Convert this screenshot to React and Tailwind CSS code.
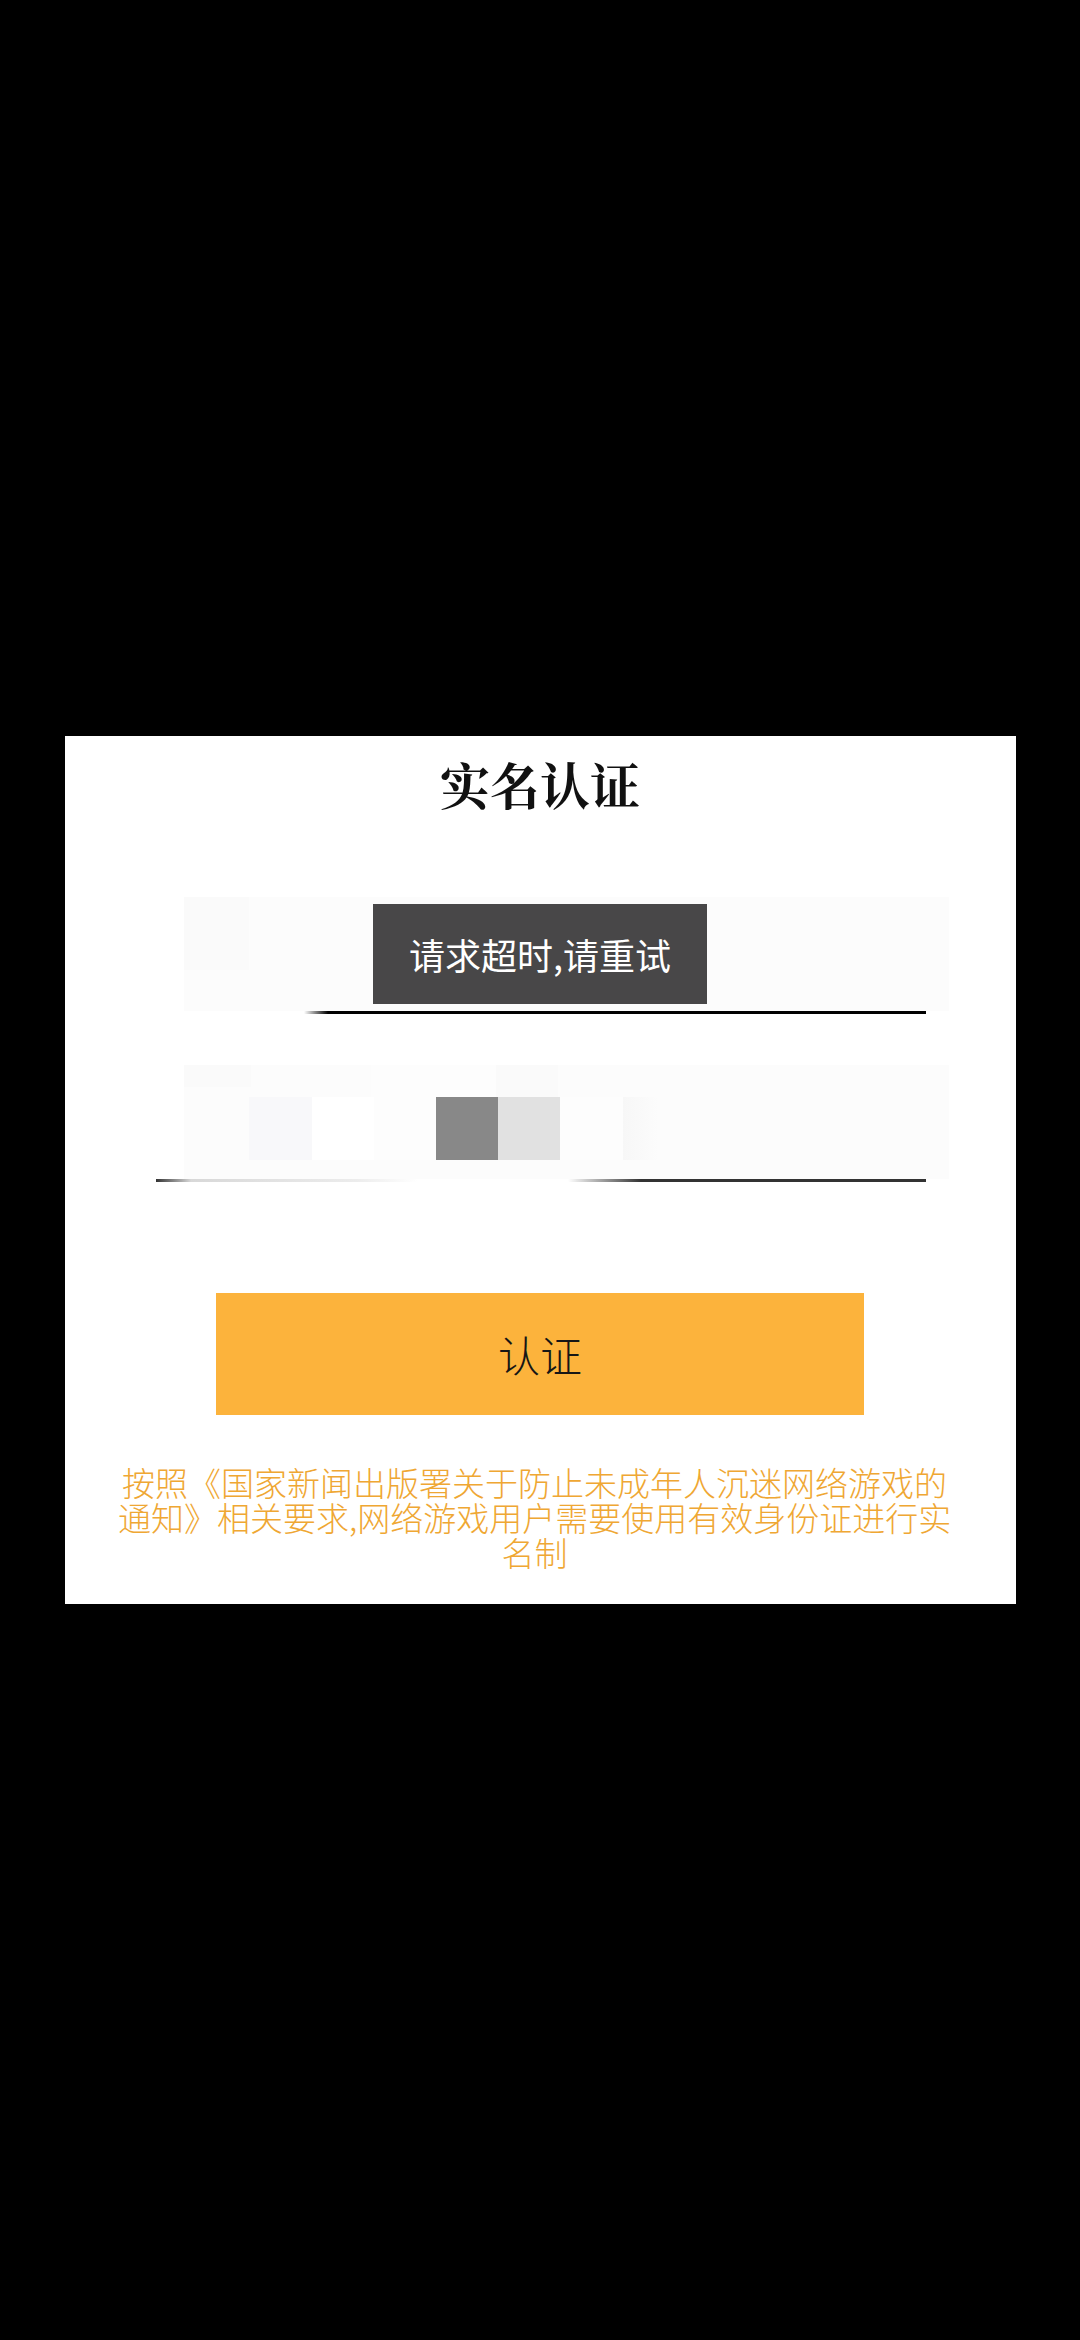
import React from "react";

const cjk = { fontFamily: '"Noto Sans CJK SC", "Noto Sans", sans-serif' };
const serif = { fontFamily: '"Noto Serif CJK SC", "Noto Sans CJK SC", serif' };

export default function App() {
  return (
    <div className="w-[1080px] h-[2340px] bg-black flex items-center justify-center" style={cjk}>
      <div className="relative w-[951px] bg-white flex flex-col items-center pt-[17px] pb-[34px]">
        <div
          className="h-[60px] leading-[60px] text-[50px] font-bold text-[#111] tracking-[0px]"
          style={serif}
        >
          实名认证
        </div>

        {/* field 1 */}
        <div className="mt-[84px] self-start ml-[91px] w-[793px] flex flex-col items-start">
          <div className="ml-[28px] w-[765px] h-[114px] bg-[#fcfcfc] flex flex-col">
            <div className="w-[65px] h-[73px] bg-[#fafafa]" />
          </div>
          <div className="w-[770px] h-[3px] bg-[linear-gradient(to_right,#fff_148px,#000_172px,#000_100%)]" />
        </div>

        {/* field 2 */}
        <div className="mt-[51px] self-start ml-[91px] w-[793px] flex flex-col items-start">
          <div className="ml-[28px] w-[765px] h-[114px] bg-[#fcfcfc] flex flex-col">
            <div className="flex h-[32px]">
              <div className="w-[67px] h-[22px] bg-[#fafafa]" />
              <div className="w-[120px] h-[32px] bg-[#fcfcfc]" />
              <div className="w-[125px] h-[32px] bg-[#fdfdfd]" />
              <div className="w-[62px] h-[32px] bg-[#fafafa]" />
            </div>
            <div className="flex ml-[65px] h-[63px]">
              <div className="w-[63px] bg-[#f8f8fa]" />
              <div className="w-[62px] bg-white" />
              <div className="w-[62px] bg-[#fdfdfd]" />
              <div className="w-[62px] bg-[#888888]" />
              <div className="w-[62px] bg-[#e1e1e1]" />
              <div className="w-[63px] bg-[#fdfdfd]" />
              <div className="w-[35px] bg-[linear-gradient(to_right,#f7f7f7,#fcfcfc)]" />
            </div>
          </div>
          <div className="w-[770px] h-[3px] bg-[linear-gradient(to_right,#333_0px,#d8d8d8_35px,#ececec_200px,#fff_262px,#fff_412px,#333_485px,#333_100%)]" />
        </div>

        {/* button */}
        <button className="mt-[111px] w-[648px] h-[122px] bg-[#fcb33c] flex items-center justify-center text-[42px] text-[#161616] font-light leading-none" style={cjk}>
          认证
        </button>

        {/* notice */}
        <div className="mt-[50px] self-stretch pl-[45px] pr-[56px]">
          <p className="text-center text-[33px] leading-[35px] text-[#efa733] font-light" style={cjk}>
            按照《国家新闻出版署关于防止未成年人沉迷网络游戏的通知》相关要求,网络游戏用户需要使用有效身份证进行实名制
          </p>
        </div>

        {/* toast overlay */}
        <div className="absolute top-[168px] left-1/2 -translate-x-1/2 w-[334px] h-[100px] bg-[#484748] flex items-center justify-center">
          <span className="text-[36px] text-white leading-none whitespace-nowrap" style={cjk}>请求超时,请重试</span>
        </div>
      </div>
    </div>
  );
}
